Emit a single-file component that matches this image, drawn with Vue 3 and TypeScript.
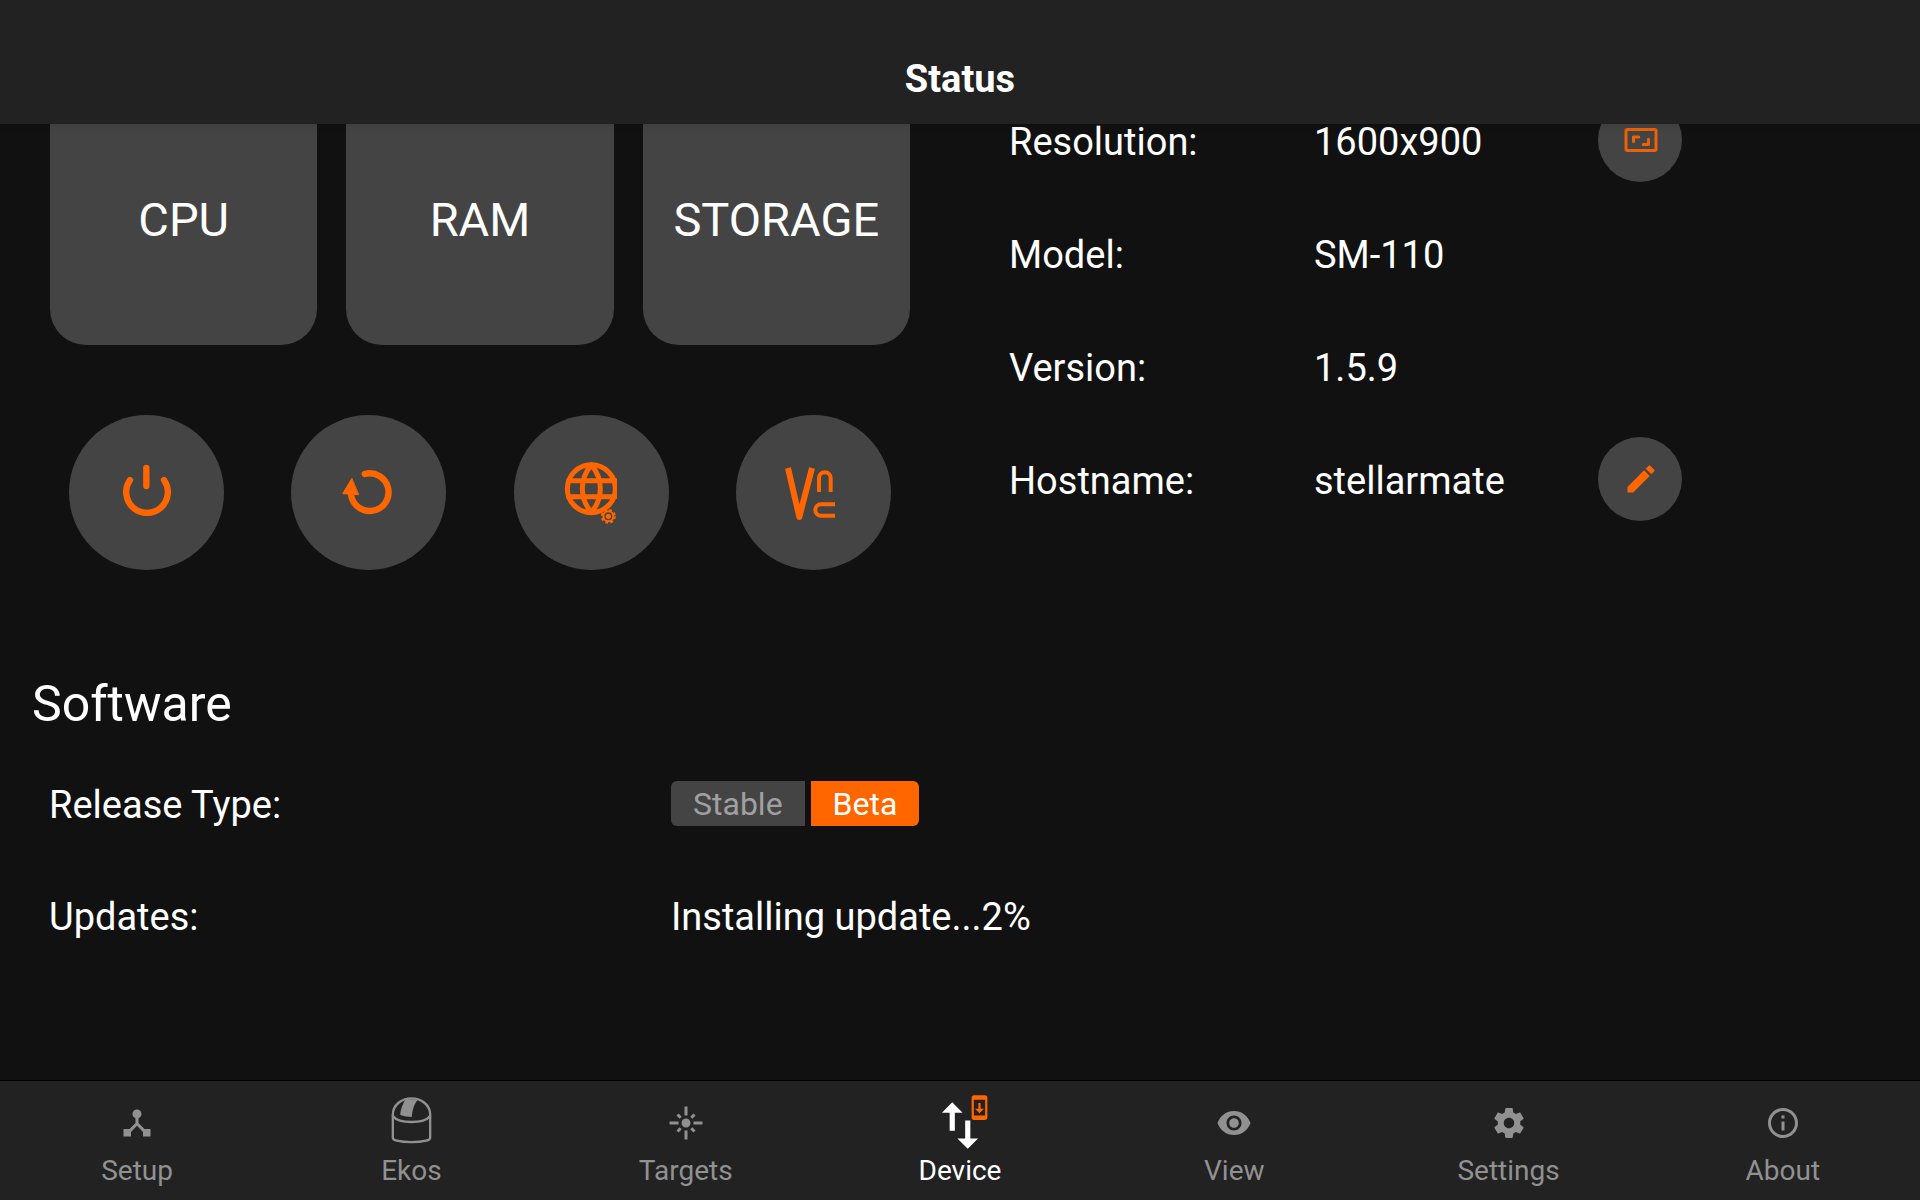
<script setup lang="ts">
import { ref } from 'vue'

interface NavItem {
  label: string
  path?: string
}

const meters: string[] = ['CPU', 'RAM', 'STORAGE']

const releaseTypes: string[] = ['Stable', 'Beta']
const release = ref<string>('Beta')

const navItems: NavItem[] = [
  {
    label: 'Setup',
    path: 'M17 16l-4-4V8.82C14.16 8.4 15 7.3 15 6c0-1.66-1.34-3-3-3S9 4.34 9 6c0 1.3.84 2.4 2 2.82V12l-4 4H3v5h5v-3.05l4-4.2 4 4.2V21h5v-5h-4z',
  },
  { label: 'Ekos' },
  {
    label: 'Targets',
    path: 'M7 11H1v2h6v-2zm2.17-3.24L7.05 5.64 5.64 7.05l2.12 2.12 1.41-1.41zM13 1h-2v6h2V1zm5.36 6.05l-1.41-1.41-2.12 2.12 1.41 1.41 2.12-2.12zM17 11v2h6v-2h-6zm-5-2c-1.66 0-3 1.34-3 3s1.34 3 3 3 3-1.34 3-3-1.34-3-3-3zm2.83 7.24l2.12 2.12 1.41-1.41-2.12-2.12-1.41 1.41zm-9.19.71l1.41 1.41 2.12-2.12-1.41-1.41-2.12 2.12zM11 23h2v-6h-2v6z',
  },
  { label: 'Device' },
  {
    label: 'View',
    path: 'M12 4C7 4 2.73 7.11 1 12c1.73 4.89 6 8 11 8s9.27-3.11 11-8c-1.73-4.89-6-8-11-8zm0 13c-2.76 0-5-2.24-5-5s2.24-5 5-5 5 2.24 5 5-2.24 5-5 5zm0-8.2c-1.77 0-3.2 1.43-3.2 3.2s1.43 3.2 3.2 3.2 3.2-1.43 3.2-3.2-1.43-3.2-3.2-3.2z',
  },
  {
    label: 'Settings',
    path: 'M19.43 12.98c.04-.32.07-.64.07-.98s-.03-.66-.07-.98l2.11-1.65c.19-.15.24-.42.12-.64l-2-3.46c-.12-.22-.39-.3-.61-.22l-2.49 1c-.52-.4-1.08-.73-1.69-.98l-.38-2.65C14.46 2.18 14.25 2 14 2h-4c-.25 0-.46.18-.49.42l-.38 2.65c-.61.25-1.17.59-1.69.98l-2.49-1c-.23-.09-.49 0-.61.22l-2 3.46c-.13.22-.07.49.12.64l2.11 1.65c-.04.32-.07.65-.07.98s.03.66.07.98l-2.11 1.65c-.19.15-.24.42-.12.64l2 3.46c.12.22.39.3.61.22l2.49-1c.52.4 1.08.73 1.69.98l.38 2.65c.03.24.24.42.49.42h4c.25 0 .46-.18.49-.42l.38-2.65c.61-.25 1.17-.59 1.69-.98l2.49 1c.23.09.49 0 .61-.22l2-3.46c.12-.22.07-.49-.12-.64l-2.11-1.65zM12 15.5c-1.93 0-3.5-1.57-3.5-3.5s1.57-3.5 3.5-3.5 3.5 1.57 3.5 3.5-1.57 3.5-3.5 3.5z',
  },
  {
    label: 'About',
    path: 'M11 7h2v2h-2zm0 4h2v6h-2zm1-9C6.48 2 2 6.48 2 12s4.48 10 10 10 10-4.48 10-10S17.52 2 12 2zm0 18c-4.41 0-8-3.59-8-8s3.59-8 8-8 8 3.59 8 8-3.59 8-8 8z',
  },
]
const activeTab = ref<string>('Device')
</script>

<template>
  <div class="screen">
    <header class="app-bar">
      <h1>Status</h1>
    </header>

    <main class="viewport">
      <div class="content">
        <div class="overview">
          <section class="controls">
            <div class="meters">
              <div v-for="meter in meters" :key="meter" class="meter">{{ meter }}</div>
            </div>
            <div class="actions">
              <button type="button" class="round large" aria-label="Power off">
                <svg viewBox="0 0 465 465" class="line">
                  <path d="M232 159V213M183 195A62.500 62.500 0 1 0 285 195" stroke-width="19" />
                </svg>
              </button>
              <button type="button" class="round large" aria-label="Restart">
                <svg viewBox="0 0 465 465" class="line">
                  <path d="M221 177A56.500 56.500 0 1 1 180 238" stroke-width="19" />
                  <path d="M182 191L155 236L202 239Z" fill="currentColor" stroke-width="3" />
                </svg>
              </button>
              <button type="button" class="round large" aria-label="Web manager">
                <svg viewBox="0 0 465 465" class="line">
                  <clipPath id="globe-edge"><rect x="140" y="130" width="169" height="180" /></clipPath>
                  <g clip-path="url(#globe-edge)" stroke-width="15">
                    <circle cx="232" cy="221" r="72" />
                    <path d="M164 197H304M164 245H304" />
                    <path d="M232 150C196 192 196 250 232 292M232 150C268 192 268 250 232 292" />
                  </g>
                  <circle cx="283" cy="304" r="19" fill="#444" stroke-width="7" stroke-dasharray="8 7" stroke-linecap="butt" />
                  <circle cx="283" cy="304" r="15" fill="#444" stroke-width="6" />
                  <circle cx="283" cy="304" r="8" fill="currentColor" stroke="none" />
                </svg>
              </button>
              <button type="button" class="round large" aria-label="VNC">
                <svg viewBox="0 0 465 465" class="line">
                  <path d="M156 159L190 306L228 159" stroke-width="18" stroke-linecap="butt" />
                  <path d="M249 231V189a17.500 17.500 0 0 1 35 0V231M297 268H255a17 17 0 0 0 0 34H297" stroke-width="12" stroke-linecap="butt" />
                </svg>
              </button>
            </div>
          </section>

          <dl class="info">
            <div class="info-row">
              <dt>Resolution:</dt>
              <dd>1600x900</dd>
              <dd class="action">
                <button type="button" class="round small" aria-label="Change resolution">
                  <svg viewBox="0 0 24 24" class="line dim">
                    <rect x="2" y="5" width="20" height="14" rx="1" stroke-width="2" />
                    <path d="M7 13V10H10.500M17 11.500V15H13.500" stroke-width="2" />
                  </svg>
                </button>
              </dd>
            </div>
            <div class="info-row">
              <dt>Model:</dt>
              <dd>SM-110</dd>
            </div>
            <div class="info-row">
              <dt>Version:</dt>
              <dd>1.5.9</dd>
            </div>
            <div class="info-row">
              <dt>Hostname:</dt>
              <dd>stellarmate</dd>
              <dd class="action">
                <button type="button" class="round small" aria-label="Edit hostname">
                  <svg viewBox="0 0 24 24" fill="currentColor">
                    <path d="M3 17.250V21h3.750L17.810 9.940l-3.750-3.750L3 17.250zM20.710 7.040c.39-.39.39-1.020 0-1.410l-2.340-2.340c-.39-.39-1.020-.39-1.410 0l-1.830 1.830 3.750 3.750 1.830-1.830z" />
                  </svg>
                </button>
              </dd>
            </div>
          </dl>
        </div>

        <section class="software">
          <h2>Software</h2>
          <dl>
            <div class="software-row">
              <dt>Release Type:</dt>
              <dd class="segments">
                <button
                  v-for="type in releaseTypes"
                  :key="type"
                  type="button"
                  class="segment"
                  :class="{ selected: release === type }"
                  :aria-pressed="release === type"
                  @click="release = type"
                >
                  {{ type }}
                </button>
              </dd>
            </div>
            <div class="software-row">
              <dt>Updates:</dt>
              <dd>Installing update...2%</dd>
            </div>
          </dl>
        </section>
      </div>
    </main>

    <nav class="tabs">
      <a
        v-for="item in navItems"
        :key="item.label"
        href="#"
        class="tab"
        :class="{ active: activeTab === item.label }"
        @click.prevent="activeTab = item.label"
      >
        <span class="tab-icon">
          <svg v-if="item.path" viewBox="0 0 24 24" class="glyph" fill="currentColor"><path :d="item.path" /></svg>
          <svg v-else-if="item.label === 'Ekos'" viewBox="0 0 122 156" class="dome line">
            <path d="M5 53C5 25 30 4 61 4S117 25 117 53V122Q117 128 105 131C80 137 42 137 17 131Q5 128 5 122Z" stroke-width="7" />
            <path d="M5 57C15 70 35 75 61 75S107 70 117 57" stroke-width="7" />
            <path d="M44 6C35 20 28 36 27 54Q42 60 62 60C63 40 68 22 80 8Z" fill="currentColor" stroke="none" />
          </svg>
          <template v-else>
            <svg viewBox="0 -1 24 24" class="arrows" fill="currentColor">
              <path d="M9 3L5 6.990h3V14h2V6.990h3L9 3zm7 14.010V10h-2v7.010h-3L15 21l4-3.990h-3z" />
            </svg>
            <svg viewBox="0 0 24 24" class="update-badge" fill="currentColor">
              <path d="M17 1H7c-1.100 0-2 .9-2 2v18c0 1.100.9 2 2 2h10c1.100 0 2-.9 2-2V3c0-1.100-.9-2-2-2zM17 19H7V5h10v14zm-1-6h-3V8h-2v5H8l4 4 4-4z" />
            </svg>
          </template>
        </span>
        <span class="tab-label">{{ item.label }}</span>
      </a>
    </nav>
  </div>
</template>

<style>
body {
  margin: 0;
  background: #111;
}
</style>

<style scoped>
.screen {
  height: 100vh;
  display: flex;
  flex-direction: column;
  overflow: hidden;
  background: #111;
  color: #fff;
  font-family: Roboto, "Noto Sans", sans-serif;
  font-size: 38px;
  line-height: 46px;
}

.screen *,
.screen {
  box-sizing: border-box;
}

h1,
h2,
dl,
dd {
  margin: 0;
}

button {
  border: 0;
  padding: 0;
  font: inherit;
  cursor: pointer;
}

.line {
  fill: none;
  stroke: currentColor;
  stroke-linecap: round;
  stroke-linejoin: round;
}

.app-bar {
  position: relative;
  z-index: 1;
  flex: none;
  padding: 56px 0 22px;
  background: #222;
  box-shadow: 0 0 10px rgba(0, 0, 0, 0.15);
  text-align: center;
}

h1 {
  font-size: 38px;
  font-weight: 700;
  line-height: 46px;
}

.viewport {
  flex: 1;
  min-height: 0;
  overflow: hidden;
}

/* the page is scrolled down a little, under the app bar */
.content {
  margin-top: -46px;
}

.overview {
  display: grid;
  grid-template-columns: 1fr 1fr;
}

.controls {
  padding: 0 35px;
}

.meters {
  display: flex;
  gap: 29px;
  padding: 0 15px;
}

.meter {
  flex: 1;
  display: flex;
  align-items: center;
  justify-content: center;
  height: 267px;
  padding-top: 16px;
  border-radius: 36px;
  background: #444;
  font-size: 47px;
}

.actions {
  display: flex;
  justify-content: space-around;
  margin-top: 70px;
}

.round {
  display: flex;
  align-items: center;
  justify-content: center;
  border-radius: 50%;
  background: #444;
  color: #ff6600;
}

.large {
  width: 155px;
  height: 155px;
}

.large svg {
  width: 100%;
  height: 100%;
}

.small {
  width: 84px;
  height: 84px;
  padding-left: 2px;
}

.small svg {
  width: 36px;
  height: 36px;
}

.dim {
  opacity: 0.9;
}

.info {
  padding: 7px 0 0 49px;
  line-height: 34px;
}

.info-row {
  display: grid;
  grid-template-columns: 305fr 284fr 322fr;
  align-items: center;
  height: 113px;
}

.action {
  padding-bottom: 3px;
}

.software {
  margin-top: 104px;
  padding-left: 32px;
}

h2 {
  font-size: 50px;
  font-weight: 400;
  line-height: 60px;
}

.software dl {
  padding: 15px 0 0 17px;
}

.software-row {
  display: grid;
  grid-template-columns: 622fr 1249fr;
  align-items: center;
  height: 112px;
}

.segments {
  display: flex;
  gap: 6px;
  padding-bottom: 3px;
}

.segment {
  height: 45px;
  padding: 2px 22px 0;
  background: #444;
  color: #a0a0a0;
  font-size: 32px;
  line-height: 43px;
}

.segment:first-child {
  border-radius: 6px 0 0 6px;
}

.segment:last-child {
  border-radius: 0 6px 6px 0;
}

.segment.selected {
  background: #ff6600;
  color: #fff;
}

.tabs {
  flex: none;
  display: grid;
  grid-template-columns: repeat(7, 1fr);
  padding: 11px 0 12px;
  border-top: 1px solid #000;
  background: #222;
}

.tab {
  display: flex;
  flex-direction: column;
  align-items: center;
  color: #919191;
  text-decoration: none;
}

.tab.active {
  color: #fff;
}

.tab-icon {
  position: relative;
  display: flex;
  align-items: center;
  justify-content: center;
  width: 62px;
  height: 62px;
}

.glyph {
  width: 36px;
  height: 36px;
}

.dome {
  width: 41px;
  height: 52px;
}

.arrows {
  width: 62px;
  height: 62px;
}

.update-badge {
  position: absolute;
  top: 2px;
  right: -2px;
  width: 27px;
  height: 27px;
  color: #ff6600;
}

.tab-label {
  font-size: 28px;
  line-height: 34px;
}
</style>
